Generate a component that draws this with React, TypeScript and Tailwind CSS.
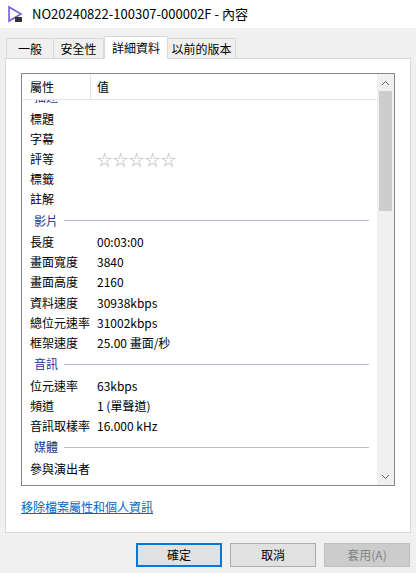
const F = { fontFamily: '"Noto Sans CJK TC", "Liberation Sans", sans-serif' };

type Row = { k: string; v?: string; sec?: boolean; stars?: boolean };
const rows: Row[] = [
  { k: '描述', sec: true },
  { k: '標題' },
  { k: '字幕' },
  { k: '評等', stars: true },
  { k: '標籤' },
  { k: '註解' },
  { k: '影片', sec: true },
  { k: '長度', v: '00:03:00' },
  { k: '畫面寬度', v: '3840' },
  { k: '畫面高度', v: '2160' },
  { k: '資料速度', v: '30938kbps' },
  { k: '總位元速率', v: '31002kbps' },
  { k: '框架速度', v: '25.00 畫面/秒' },
  { k: '音訊', sec: true },
  { k: '位元速率', v: '63kbps' },
  { k: '頻道', v: '1 (單聲道)' },
  { k: '音訊取樣率', v: '16.000 kHz' },
  { k: '媒體', sec: true },
  { k: '參與演出者' },
];

const Btn = ({ label, primary, disabled }: { label: string; primary?: boolean; disabled?: boolean }) => (
  <div
    className={`flex h-[24px] w-[86px] items-center justify-center text-[12px] ${
      primary ? 'border-2 border-[#0078d7] bg-[#e1e1e1]' : disabled ? 'border border-[#bfbfbf] bg-[#cccccc] text-[#838383]' : 'border border-[#adadad] bg-[#e1e1e1]'
    }`}
  >
    {label}
  </div>
);

export default function App() {
  return (
    <div className="flex h-[573px] w-[416px] flex-col bg-[#f0f0f0] text-black" style={F}>
      <div className="flex h-[28px] items-center gap-[8px] bg-white px-[6px]">
        <svg width="18" height="18" viewBox="0 0 18 18">
          <path d="M3 2 L15 9 L3 16 Z" fill="none" stroke="#7b5cd6" strokeWidth="1.6" />
          <rect x="9" y="12" width="7" height="5" fill="#333" />
        </svg>
        <span className="text-[13px]">NO20240822-100307-000002F - 內容</span>
      </div>
      <div className="mt-[9px] flex h-[21px] items-end px-[6px] text-[12px]">
        <div className="flex h-[20px] w-[48px] items-center justify-center border border-b-0 border-[#d9d9d9] bg-[#f0f0f0]">一般</div>
        <div className="flex h-[20px] w-[50px] items-center justify-center border border-b-0 border-l-0 border-[#d9d9d9] bg-[#f0f0f0]">安全性</div>
        <div className="z-10 -mb-px flex h-[23px] w-[64px] items-center justify-center border border-b-0 border-[#d9d9d9] bg-white">詳細資料</div>
        <div className="flex h-[20px] w-[68px] items-center justify-center border border-b-0 border-l-0 border-[#d9d9d9] bg-[#f0f0f0]">以前的版本</div>
      </div>
      <div className="mx-[5px] flex h-[475px] flex-col border border-[#d9d9d9] bg-white px-[15px] pt-[14px]">
        <div className="flex h-[413px] border border-[#828790]">
          <div className="flex flex-1 flex-col">
            <div className="flex h-[26px] shrink-0 items-center border-b border-[#e5e5e5] text-[12px]">
              <div className="flex h-full w-[69px] items-center border-r border-[#e5e5e5] pl-[8px]">屬性</div>
              <div className="pl-[6px]">值</div>
            </div>
            <div className="flex-1 overflow-hidden">
              <div className="-mt-[14px] flex flex-col text-[12px]">
                {rows.map(r =>
                  r.sec ? (
                    <div key={r.k} className="flex h-[22.5px] items-center gap-[6px] pl-[12px] text-[#1e3287]">
                      <span>{r.k}</span>
                      <div className="mr-[8px] h-px flex-1 bg-[#b4bcd6]" />
                    </div>
                  ) : (
                    <div key={r.k} className="flex h-[20.2px] items-center pl-[8px]">
                      <span className="w-[67px] shrink-0">{r.k}</span>
                      {r.stars ? (
                        <span className="text-[15px] tracking-[1px] text-[#b8b8b8]">☆☆☆☆☆</span>
                      ) : (
                        <span>{r.v}</span>
                      )}
                    </div>
                  ),
                )}
              </div>
            </div>
          </div>
          <div className="flex w-[17px] flex-col items-center bg-[#f0f0f0]">
            <div className="flex h-[17px] items-center">
              <svg width="9" height="6" viewBox="0 0 9 6"><path d="M1 5 L4.5 1.5 L8 5" fill="none" stroke="#606060" /></svg>
            </div>
            <div className="h-[120px] w-[13px] bg-[#cdcdcd]" />
            <div className="flex-1" />
            <div className="flex h-[17px] items-center">
              <svg width="9" height="6" viewBox="0 0 9 6"><path d="M1 1 L4.5 4.5 L8 1" fill="none" stroke="#606060" /></svg>
            </div>
          </div>
        </div>
        <div className="mt-[12px] text-[12px] text-[#0066cc] underline">移除檔案屬性和個人資訊</div>
      </div>
      <div className="mt-[10px] flex justify-end gap-[8px] pr-[6px]">
        <Btn label="確定" primary />
        <Btn label="取消" />
        <Btn label="套用(A)" disabled />
      </div>
    </div>
  );
}
